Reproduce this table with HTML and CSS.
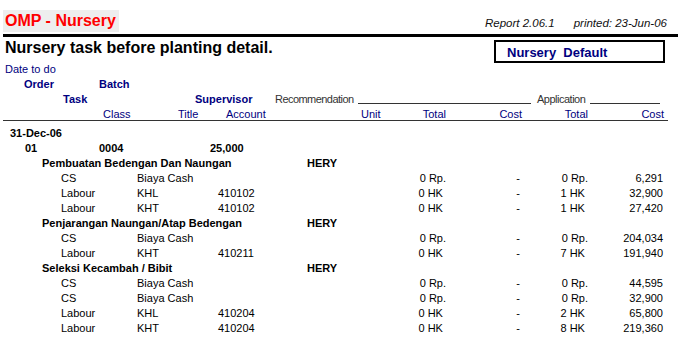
FILE: index.html
```html
<!DOCTYPE html>
<html>
<head>
<meta charset="utf-8">
<link rel="stylesheet" href="styles.css">
</head>
<body>
<div class="page">
  <div class="top">
    <div class="brand">OMP - Nursery</div>
    <div class="meta"><span class="ver">Report 2.06.1</span><span>printed: 23-Jun-06</span></div>
  </div>
  <div class="rule"></div>
  <div class="titlerow">
    <h1 class="title">Nursery task before planting detail.</h1>
    <div class="badge">Nursery&nbsp; Default</div>
  </div>

  <div class="head">
    <div class="row"><span class="p5">Date to do</span></div>
    <div class="row bold"><span class="w-order">Order</span><span>Batch</span></div>
    <div class="row">
      <span class="w-task bold">Task</span>
      <span class="w-sup bold">Supervisor</span>
      <span class="gray w-rec">Recommendation</span><span class="uline u1"></span>
      <span class="gray w-app">Application</span><span class="uline u2"></span>
    </div>
    <div class="row hline">
      <span class="w-class">Class</span>
      <span class="w-title">Title</span>
      <span class="w-acc">Account</span>
      <span class="w-unit">Unit</span>
      <span class="num n1">Total</span>
      <span class="num n2h">Cost</span>
      <span class="num n3h">Total</span>
      <span class="num n4h">Cost</span>
    </div>
  </div>

  <div class="body">
    <div class="row bold"><span class="p10">31-Dec-06</span></div>
    <div class="row bold"><span class="w-ord">01</span><span class="w-batch">0004</span><span>25,000</span></div>

    <div class="row bold task"><span class="w-tname">Pembuatan Bedengan Dan Naungan</span><span>HERY</span></div>
    <div class="row det"><span class="c-lab">CS</span><span class="c-cls">Biaya Cash</span><span class="c-acc"></span><span class="num n1">0 Rp.</span><span class="num n2">-</span><span class="num n3">0 Rp.</span><span class="num n4">6,291</span></div>
    <div class="row det"><span class="c-lab">Labour</span><span class="c-cls">KHL</span><span class="c-acc">410102</span><span class="num n1">0 HK&nbsp;</span><span class="num n2">-</span><span class="num n3">1 HK&nbsp;</span><span class="num n4">32,900</span></div>
    <div class="row det"><span class="c-lab">Labour</span><span class="c-cls">KHT</span><span class="c-acc">410102</span><span class="num n1">0 HK&nbsp;</span><span class="num n2">-</span><span class="num n3">1 HK&nbsp;</span><span class="num n4">27,420</span></div>

    <div class="row bold task"><span class="w-tname">Penjarangan Naungan/Atap Bedengan</span><span>HERY</span></div>
    <div class="row det"><span class="c-lab">CS</span><span class="c-cls">Biaya Cash</span><span class="c-acc"></span><span class="num n1">0 Rp.</span><span class="num n2">-</span><span class="num n3">0 Rp.</span><span class="num n4">204,034</span></div>
    <div class="row det"><span class="c-lab">Labour</span><span class="c-cls">KHT</span><span class="c-acc">410211</span><span class="num n1">0 HK&nbsp;</span><span class="num n2">-</span><span class="num n3">7 HK&nbsp;</span><span class="num n4">191,940</span></div>

    <div class="row bold task"><span class="w-tname">Seleksi Kecambah / Bibit</span><span>HERY</span></div>
    <div class="row det"><span class="c-lab">CS</span><span class="c-cls">Biaya Cash</span><span class="c-acc"></span><span class="num n1">0 Rp.</span><span class="num n2">-</span><span class="num n3">0 Rp.</span><span class="num n4">44,595</span></div>
    <div class="row det"><span class="c-lab">CS</span><span class="c-cls">Biaya Cash</span><span class="c-acc"></span><span class="num n1">0 Rp.</span><span class="num n2">-</span><span class="num n3">0 Rp.</span><span class="num n4">32,900</span></div>
    <div class="row det"><span class="c-lab">Labour</span><span class="c-cls">KHL</span><span class="c-acc">410204</span><span class="num n1">0 HK&nbsp;</span><span class="num n2">-</span><span class="num n3">2 HK&nbsp;</span><span class="num n4">65,800</span></div>
    <div class="row det"><span class="c-lab">Labour</span><span class="c-cls">KHT</span><span class="c-acc">410204</span><span class="num n1">0 HK&nbsp;</span><span class="num n2">-</span><span class="num n3">8 HK&nbsp;</span><span class="num n4">219,360</span></div>
  </div>
</div>
</body>
</html>
```

FILE: styles.css
```css
* { box-sizing: border-box; }
html, body { margin: 0; padding: 0; background: #fff; }
body { font-family: "Liberation Sans", Arial, sans-serif; font-size: 11px; color: #000; }
.page { width: 678px; height: 338px; overflow: hidden; }

.top { display: flex; justify-content: space-between; align-items: flex-end; height: 34px; padding-left: 3px; }
.brand { margin-top: 10px; background: #eeeeee; color: #ff0000; font-weight: bold; font-size: 16px; line-height: 18px; height: 22px; padding: 2px 3px 0 2px; align-self: flex-start; }
.meta { font-style: italic; font-size: 11.5px; line-height: 13px; padding-right: 11px; padding-bottom: 4px; color: #111; }
.meta .ver { margin-right: 19px; }
.rule { height: 3px; background: #000; margin-left: 3px; }

.titlerow { display: flex; justify-content: space-between; height: 24px; padding-left: 5px; padding-right: 13px; }
.title { margin: 0; font-size: 16px; line-height: 19px; padding-top: 1px; font-weight: bold; }
.badge { margin-top: 3px; width: 171px; height: 23px; border: 2px solid #000; color: #000080; font-weight: bold; font-size: 13px; line-height: 17px; padding: 2px 0 0 11px; flex: none; }

.head { color: #000080; padding-top: 1px; }
.row { display: flex; height: 15px; line-height: 15px; white-space: nowrap; }
.bold { font-weight: bold; }
.p5 { padding-left: 5px; }
.p10 { padding-left: 10px; }
.w-order { margin-left: 24px; width: 75px; }
.w-task { margin-left: 63px; width: 132px; }
.w-sup { width: 80px; }
.gray { color: #333; }
.w-rec { width: 83px; letter-spacing: -0.55px; flex: none; }
.w-app { width: 53px; margin-left: 6px; letter-spacing: -0.5px; flex: none; }
.uline { height: 12px; border-bottom: 1px solid #333; flex: none; }
.u1 { width: 173px; }
.u2 { width: 70px; }

.hline { height: 14px; line-height: 15px; border-bottom: 1px solid #333; width: 665px; margin-left: 3px; margin-bottom: 5px; }
.w-class { margin-left: 100px; width: 75px; }
.w-title { width: 48px; }
.w-acc { width: 135px; }
.w-unit { width: 0; }
.num { text-align: right; flex: none; }
.hline .n1 { width: 85px; margin-left: 0; }
.n2h { width: 76px; }
.n3h { width: 66px; }
.n4h { width: 76px; }

.body .row { color: #000; }
.w-ord { margin-left: 25px; width: 74px; }
.w-batch { width: 111px; }
.task .w-tname { margin-left: 42px; width: 265px; }

.det .c-lab { margin-left: 61px; width: 76px; }
.det .c-cls { width: 81px; }
.det .c-acc { width: 100px; }
.det .n1 { width: 128px; }
.det .n2 { width: 74px; }
.det .n3 { width: 68px; }
.det .n4 { width: 75px; }
```
